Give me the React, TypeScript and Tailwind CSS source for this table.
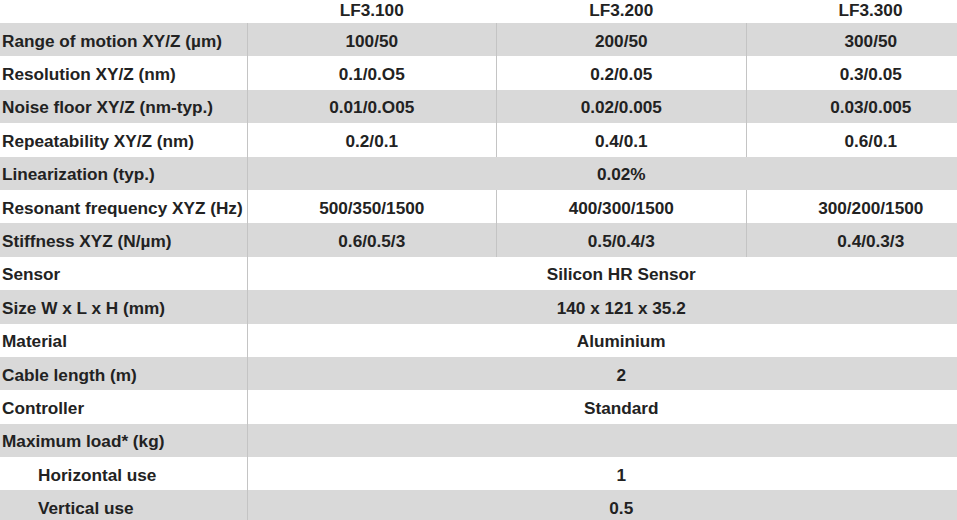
const rows: { label: string; values: string[]; indent?: boolean }[] = [
  { label: 'Range of motion XY/Z (µm)', values: ['100/50', '200/50', '300/50'] },
  { label: 'Resolution XY/Z (nm)', values: ['0.1/0.O5', '0.2/0.05', '0.3/0.05'] },
  { label: 'Noise floor XY/Z (nm-typ.)', values: ['0.01/0.O05', '0.02/0.005', '0.03/0.005'] },
  { label: 'Repeatability XY/Z (nm)', values: ['0.2/0.1', '0.4/0.1', '0.6/0.1'] },
  { label: 'Linearization (typ.)', values: ['0.02%'] },
  { label: 'Resonant frequency XYZ (Hz)', values: ['500/350/1500', '400/300/1500', '300/200/1500'] },
  { label: 'Stiffness XYZ (N/µm)', values: ['0.6/0.5/3', '0.5/0.4/3', '0.4/0.3/3'] },
  { label: 'Sensor', values: ['Silicon HR Sensor'] },
  { label: 'Size W x L x H (mm)', values: ['140 x 121 x 35.2'] },
  { label: 'Material', values: ['Aluminium'] },
  { label: 'Cable length (m)', values: ['2'] },
  { label: 'Controller', values: ['Standard'] },
  { label: 'Maximum load* (kg)', values: [''] },
  { label: 'Horizontal use', values: ['1'], indent: true },
  { label: 'Vertical use', values: ['0.5'], indent: true },
];

const models = ['LF3.100', 'LF3.200', 'LF3.300'];

export default function App() {
  return (
    <div className="h-[520px] w-[957px] overflow-hidden bg-white font-['Liberation_Sans',Arial,sans-serif] text-[17.2px] font-bold text-[#222]">
      <table className="w-[995px] table-fixed border-collapse">
        <colgroup>
          <col className="w-[247px]" />
          <col className="w-[249.5px]" />
          <col className="w-[249.5px]" />
          <col className="w-[249px]" />
        </colgroup>
        <thead>
          <tr className="h-[23px]">
            <th />
            {models.map((m) => (
              <th key={m} className="pb-[2px] text-center align-middle font-bold leading-none">
                {m}
              </th>
            ))}
          </tr>
        </thead>
        <tbody>
          {rows.map((row, i) => (
            <tr key={row.label} className={`h-[33.4px] ${i % 2 === 0 ? 'bg-[#d9d9d9]' : 'bg-white'}`}>
              <td className={`whitespace-nowrap pt-[3px] align-middle leading-none ${row.indent ? 'pl-[38px]' : 'pl-[2px]'}`}>
                {row.label}
              </td>
              {row.values.length === 1 ? (
                <td colSpan={3} className="border-l border-[#c4c4c4] pt-[3px] text-center align-middle leading-none">
                  {row.values[0]}
                </td>
              ) : (
                row.values.map((v, j) => (
                  <td key={j} className="border-l border-[#c4c4c4] pt-[3px] text-center align-middle leading-none">
                    {v}
                  </td>
                ))
              )}
            </tr>
          ))}
        </tbody>
      </table>
    </div>
  );
}
